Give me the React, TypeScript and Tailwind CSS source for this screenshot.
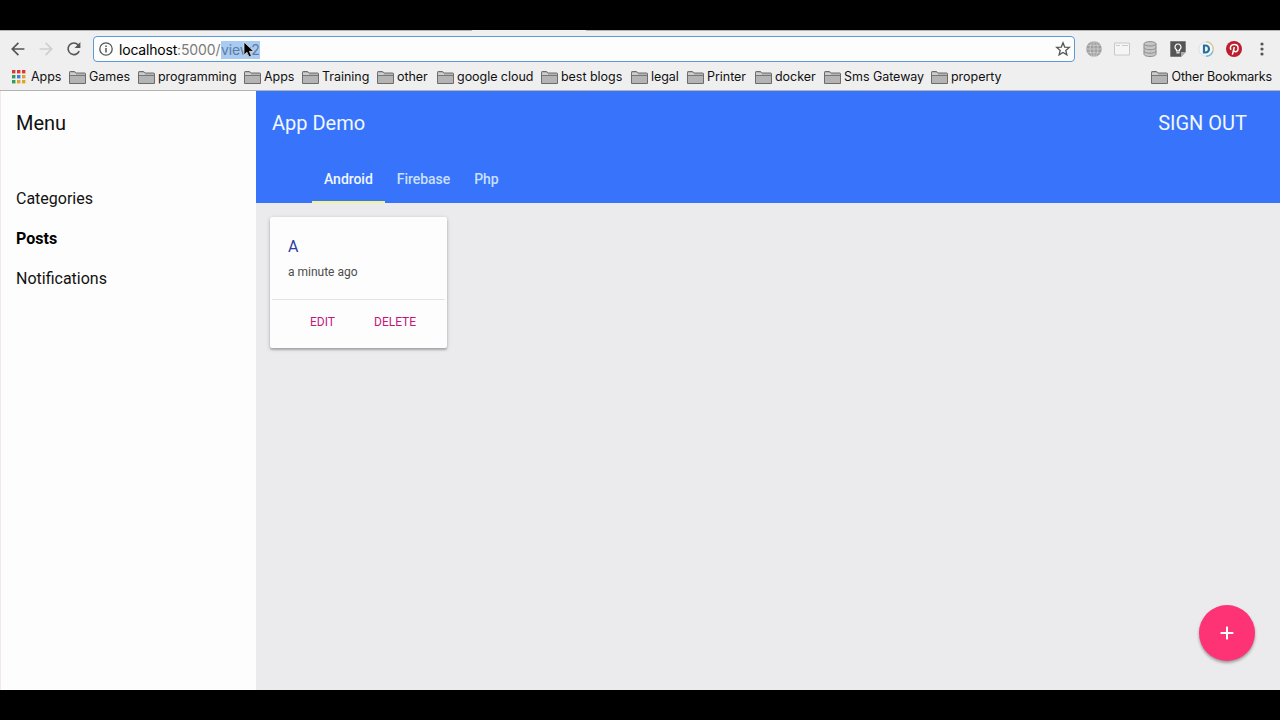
import { Plus } from "lucide-react";
import { clsx } from "clsx";

interface Bookmark {
  label: string;
  width: string;
}

const bookmarks: Bookmark[] = [
  { label: "Games", width: "w-[69px]" },
  { label: "programming", width: "w-[106px]" },
  { label: "Apps", width: "w-[58px]" },
  { label: "Training", width: "w-[75px]" },
  { label: "other", width: "w-[60px]" },
  { label: "google cloud", width: "w-[104px]" },
  { label: "best blogs", width: "w-[90px]" },
  { label: "legal", width: "w-[56px]" },
  { label: "Printer", width: "w-[68px]" },
  { label: "docker", width: "w-[69px]" },
  { label: "Sms Gateway", width: "w-[107px]" },
  { label: "property", width: "w-[80px]" },
];

const menuItems = ["Categories", "Posts", "Notifications"];
const tabs = ["Android", "Firebase", "Php"];

const appDots = [
  "#d93a32", "#d93a32", "#d93a32",
  "#2f9e58", "#3f7de0", "#e2a32b",
  "#2f9e58", "#e2a32b", "#e2a32b",
];

function ArrowIcon({ color, flip }: { color: string; flip?: boolean }) {
  return (
    <svg
      width="14"
      height="14"
      viewBox="0 0 14 14"
      fill="none"
      stroke={color}
      strokeWidth="1.7"
      className={clsx("shrink-0", flip && "-scale-x-100")}
    >
      <path d="M13.4 7H1.6M7.4.9 1.3 7l6.1 6.1" />
    </svg>
  );
}

function FolderIcon() {
  return (
    <svg width="17" height="13" viewBox="0 0 17 13" className="shrink-0">
      <path
        d="M.5 12.5V1.2q0-.7.7-.7h4.2q.6 0 .8.6l.4.9h9q.9 0 .9.8v9.7z"
        fill="#b4b4b4"
        stroke="#6c6c6c"
      />
      <path d="M1 3.5h5.5l.8-1H1z" fill="#e8e8e8" />
      <path d="M1 4.5h15" stroke="#777" />
    </svg>
  );
}

function AppsIcon() {
  return (
    <svg width="14" height="14" viewBox="0 0 14 14" className="shrink-0">
      {appDots.map((color, i) => (
        <rect
          key={i}
          x={(i % 3) * 5}
          y={Math.floor(i / 3) * 5}
          width="3.4"
          height="3.4"
          fill={color}
        />
      ))}
    </svg>
  );
}

function ReloadIcon() {
  return (
    <svg width="16" height="16" viewBox="0 0 16 16" fill="none" className="shrink-0">
      <path d="M13.2 10.2A5.8 5.8 0 1 1 12.3 4" stroke="#555" strokeWidth="1.6" />
      <path d="M14.4 1v6H8.6z" fill="#555" />
    </svg>
  );
}

function Cursor() {
  return (
    <svg
      width="12"
      height="18"
      viewBox="0 0 12 18"
      className="absolute top-0 left-[22px]"
    >
      <path
        d="M1 1v13l3-2.8 2 4.8 2.4-1-2-4.7h4.2z"
        fill="#000"
        stroke="#e8eef5"
        strokeWidth=".7"
      />
    </svg>
  );
}

function Extensions() {
  return (
    <div className="flex items-center gap-3">
      {/* globe */}
      <svg width="16" height="16" viewBox="0 0 16 16" fill="none">
        <circle cx="8" cy="8" r="7.8" fill="#a0a0a0" />
        <g stroke="#d0d0d0" strokeWidth=".8">
          <path d="M0 8h16M8 0v16M1.5 4.3h13M1.5 11.7h13" />
          <ellipse cx="8" cy="8" rx="4" ry="7.8" />
        </g>
      </svg>
      {/* window */}
      <svg width="16" height="16" viewBox="0 0 16 16" fill="none">
        <path d="M.5 2h15v12H.5z" fill="#f5f5f5" stroke="#c8c8c8" />
        <path d="M2 4.5h4M8 4.5h6" stroke="#ccc" />
      </svg>
      {/* database */}
      <svg width="16" height="16" viewBox="0 0 16 16" fill="#c6c6c6" stroke="#8d8d8d">
        <path d="M2 3v10.2c0 1.3 2.7 2.3 6 2.3s6-1 6-2.3V3" />
        <ellipse cx="8" cy="2.8" rx="6" ry="2.2" />
        <path d="M2 6.6c0 1.2 2.7 2.1 6 2.1s6-.9 6-2.1M2 10.1c0 1.2 2.7 2.1 6 2.1s6-.9 6-2.1" fill="none" />
      </svg>
      {/* bulb note */}
      <svg width="16" height="16" viewBox="0 0 16 16" fill="none">
        <path d="M.3.3h15.4v10.8l-4.6 4.6H.3z" fill="#555" />
        <path d="M11 15.7V11h4.7z" fill="#aaa" />
        <path d="M6.5 9.8V8.6a3 3 0 1 1 3 0v1.2z" stroke="#fff" strokeWidth="1.2" />
        <path d="M6.4 11.8h3.2" stroke="#fff" strokeWidth="1.2" />
      </svg>
      {/* D ring */}
      <svg width="16" height="16" viewBox="0 0 16 16" fill="none">
        <circle cx="8" cy="8" r="7.2" fill="#f5f7f8" stroke="#d3e1e8" />
        <path d="M8 .8a7.2 7.2 0 0 1 6.8 9.5" stroke="#d9c9a0" strokeWidth="1.4" />
        <path d="M14.8 10.3A7.2 7.2 0 0 1 8 15.2" stroke="#70b7d8" strokeWidth="1.4" />
        <path d="M6 4.5h1.5a3.5 3.5 0 0 1 0 7H6z" stroke="#26709e" strokeWidth="2.2" />
      </svg>
      {/* pinterest */}
      <svg width="16" height="16" viewBox="0 0 16 16" fill="none">
        <circle cx="8" cy="8" r="8" fill="#bd1e2c" />
        <path
          d="M4.9 8.8C3.5 6.3 5 3.5 8.2 3.5c2.4 0 3.9 1.5 3.9 3.5 0 2.2-1.2 3.7-2.7 3.7-.9 0-1.5-.5-1.7-1.1M8.3 6 6.4 13.6"
          stroke="#fff"
          strokeWidth="1.5"
        />
      </svg>
      <svg width="16" height="16" viewBox="0 0 16 16" fill="#555">
        <circle cx="8" cy="3" r="1.6" />
        <circle cx="8" cy="8" r="1.6" />
        <circle cx="8" cy="13" r="1.6" />
      </svg>
    </div>
  );
}

function BrowserBar() {
  return (
    <div className="flex h-[61px] flex-col border-b border-[#b3b3b3] bg-[#efefef] font-[Inter,sans-serif]">
      {/* Bottom edge of the tab strip, open under the active tab */}
      <div className="flex h-px shrink-0">
        <div className="w-[472px] bg-[#b5b5b5]" />
        <div className="w-[114px] bg-[#efefef]" />
        <div className="flex-1 bg-[#b5b5b5]" />
      </div>

      <div className="mt-[5px] flex h-[26px] shrink-0 items-center pl-[11px]">
        <ArrowIcon color="#555" />
        <div className="ml-[14px] flex">
          <ArrowIcon color="#cfcfcf" flip />
        </div>
        <div className="ml-[13px]">
          <ReloadIcon />
        </div>
        <div className="ml-[11px] flex h-[26px] w-[982px] items-center rounded-[4px] border-[1.5px] border-[#5c9bd8] bg-[#fdfdfd] pr-[3px] pl-[5px]">
          <svg width="14" height="14" viewBox="0 0 14 14" fill="none" className="shrink-0">
            <circle cx="7" cy="7" r="6.2" stroke="#555" strokeWidth="1.3" />
            <path d="M7 6v4.5M7 3.4V5" stroke="#555" strokeWidth="1.5" />
          </svg>
          <div className="mt-px ml-[6px] flex text-[14px] leading-[18px] whitespace-pre text-[#7b7b7b]">
            <span className="w-[58px] tracking-[-0.2px] text-black">localhost</span>
            <span className="w-[44px] tracking-[-0.1px]">:5000/</span>
            <span className="relative w-[39px] bg-[#a9cbf2] tracking-[-0.1px] text-[#5c7da4]">
              view2
              <Cursor />
            </span>
          </div>
          <svg width="16" height="16" viewBox="0 0 16 16" fill="none" className="ml-auto">
            <path
              d="m8 1.8 1.7 4.3 4.6.3-3.5 3 1.1 4.5L8 11.4l-3.9 2.5 1.1-4.5-3.5-3 4.6-.3z"
              stroke="#555"
              strokeWidth="1.3"
            />
          </svg>
        </div>
        <div className="ml-[11px]">
          <Extensions />
        </div>
      </div>

      <div className="mt-px flex h-[28px] shrink-0 items-center pl-[12px] text-[12.5px] tracking-[-0.04px] whitespace-nowrap text-[#111]">
        <div className="flex w-[57px] items-center gap-[5px]">
          <AppsIcon />
          <span>Apps</span>
        </div>
        {bookmarks.map((bookmark, i) => (
          <div key={i} className={clsx("flex shrink-0 items-center gap-[3px]", bookmark.width)}>
            <FolderIcon />
            <span>{bookmark.label}</span>
          </div>
        ))}
        <div className="ml-auto flex items-center gap-[3px] pr-[8px] tracking-[-0.16px]">
          <FolderIcon />
          <span>Other Bookmarks</span>
        </div>
      </div>
    </div>
  );
}

function Sidebar() {
  return (
    <aside className="w-64 shrink-0 border-l border-[#f0e8ea] bg-[#fdfdfd] pl-[15px] text-[#111]">
      <div className="flex h-16 items-center text-[20px]">Menu</div>
      <nav className="mt-6">
        {menuItems.map((item) => (
          <div
            key={item}
            className={clsx("flex h-10 items-center text-[16px]", item === "Posts" && "font-bold text-black")}
          >
            {item}
          </div>
        ))}
      </nav>
    </aside>
  );
}

function Header() {
  return (
    <header className="h-28 bg-[#3873fb] text-[#f0f8ff]">
      <div className="flex h-16 items-center justify-between pr-[33px] pl-4 text-[20px]">
        <h1>App Demo</h1>
        <button>SIGN OUT</button>
      </div>
      <div className="flex h-12 pl-14 text-[14px] font-medium">
        {tabs.map((tab) => (
          <button
            key={tab}
            className={clsx(
              "border-b-2 px-3 pt-[2px] tracking-[-0.04px]",
              tab === "Android" ? "border-[#f0f58a]" : "border-transparent text-[#c9e0ff]"
            )}
          >
            {tab}
          </button>
        ))}
      </div>
    </header>
  );
}

function PostCard() {
  return (
    <div className="mt-[14px] ml-[14px] h-[131px] w-[177px] rounded-[2px] bg-[#fdfdfd] shadow-[0_2px_2px_rgba(0,0,0,0.2),0_1px_4px_rgba(0,0,0,0.18)]">
      <div className="h-[82px] px-[18px] pt-[20px]">
        <h2 className="text-[16px] leading-5 text-[#303f9f]">A</h2>
        <p className="mt-[7px] text-[12px] leading-4 text-[#4d4d4d]">a minute ago</p>
      </div>
      <div className="mx-[2px] flex h-[48px] border-t border-[#e3e3e3] pt-[13px] pl-[38px] text-[12px] leading-[18px] text-[#c2187c]">
        <button className="h-[18px] w-[64px] text-left">EDIT</button>
        <button className="h-[18px]">DELETE</button>
      </div>
    </div>
  );
}

export default function App() {
  return (
    <div className="h-[720px] w-[1280px] overflow-hidden bg-black py-[30px] font-[Roboto,sans-serif]">
      <BrowserBar />
      <div className="flex h-[599px]">
        <Sidebar />
        <main className="relative flex-1 bg-[#ebebed]">
          <Header />
          <PostCard />
          <button className="absolute right-[25px] bottom-[29px] flex h-14 w-14 items-center justify-center rounded-full bg-[#fd3375] text-white shadow-[0_2px_3px_rgba(0,0,0,0.35)]">
            <Plus size={22} strokeWidth={2.2} strokeLinecap="butt" />
          </button>
        </main>
      </div>
    </div>
  );
}
